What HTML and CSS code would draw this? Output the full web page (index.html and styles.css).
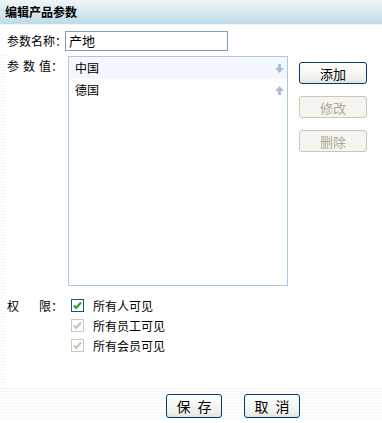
FILE: index.html
```html
<!DOCTYPE html>
<html lang="zh-CN">
<head>
    <meta charset="UTF-8">
    <title>编辑产品参数</title>
    <link rel="stylesheet" href="styles.css">
</head>
<body>
    <div id="dialog">
        <div id="header">编辑产品参数</div>
        <div id="form">
            <div class="row">
                <span class="label">参数名称：</span>
                <input type="text" id="paramName" value="产地">
            </div>
            <div class="row values">
                <span class="label spread"><span>参</span><span>数</span><span>值：</span></span>
                <div id="valueList">
                    <div class="item selected">
                        <span>中国</span>
                        <svg class="arrow" width="9" height="9" viewBox="0 0 9 9"><path d="M3 0h3v4h3L4.5 9 0 4h3z" fill="#a9bfd9"/></svg>
                    </div>
                    <div class="item">
                        <span>德国</span>
                        <svg class="arrow" width="9" height="9" viewBox="0 0 9 9"><path d="M3 9h3V5h3L4.5 0 0 5h3z" fill="#a9bfd9"/></svg>
                    </div>
                </div>
                <div id="valueButtons">
                    <button class="btn">添加</button>
                    <button class="btn" disabled>修改</button>
                    <button class="btn" disabled>删除</button>
                </div>
            </div>
            <div class="row perms">
                <span class="label spread"><span>权</span><span>限：</span></span>
                <div class="checks">
                    <label class="check"><span class="box on"><svg width="9" height="9" viewBox="0 0 9 9"><path d="M1 4.5l2.2 2.4L8 1.5" stroke="#21a121" stroke-width="2" fill="none"/></svg></span>所有人可见</label>
                    <label class="check"><span class="box off"><svg width="9" height="9" viewBox="0 0 9 9"><path d="M1 4.5l2.2 2.4L8 1.5" stroke="#c4c2b5" stroke-width="2" fill="none"/></svg></span>所有员工可见</label>
                    <label class="check"><span class="box off"><svg width="9" height="9" viewBox="0 0 9 9"><path d="M1 4.5l2.2 2.4L8 1.5" stroke="#c4c2b5" stroke-width="2" fill="none"/></svg></span>所有会员可见</label>
                </div>
            </div>
        </div>
        <div id="footer">
            <button class="btn wide">保 存</button>
            <button class="btn wide">取 消</button>
        </div>
    </div>
</body>
</html>
```

FILE: styles.css
```css
body, html {
    margin: 0;
    padding: 0;
    background-color: #ffffff;
    font-family: "Noto Sans CJK SC", "Liberation Sans", sans-serif;
    font-size: 12px;
    color: #000000;
}
#dialog {
    width: 382px;
    height: 423px;
    display: flex;
    flex-direction: column;
    background:
        repeating-linear-gradient(to bottom, #f6f6f6 0, #f6f6f6 1px, #ffffff 1px, #ffffff 3px) left 55px / 6px 335px no-repeat,
        #ffffff;
}
#header {
    height: 24px;
    line-height: 24px;
    padding-left: 5px;
    font-weight: bold;
    background: linear-gradient(to bottom, #f1f5f7, #bddbe7);
    border-bottom: 1px solid #f2f6f8;
}
#form {
    flex: 1;
    padding: 6px 0 0 7px;
}
.row {
    display: flex;
    align-items: flex-start;
}
.label {
    width: 58px;
    flex-shrink: 0;
    line-height: 20px;
    white-space: nowrap;
}
.label.spread {
    display: flex;
    justify-content: space-between;
    width: 56px;
    margin-right: 2px;
}
#paramName {
    margin: 0;
    width: 155px;
    height: 14px;
    padding: 2px 3px;
    border: 1px solid #7f9db9;
    font-family: inherit;
    font-size: 13px;
    line-height: 14px;
    outline: none;
}
.values {
    margin-top: 5px;
}
#valueList {
    margin-left: 3px;
    width: 218px;
    height: 228px;
    border: 1px solid #a7c8ea;
    display: flex;
    flex-direction: column;
}
.item {
    height: 22px;
    line-height: 22px;
    padding: 0 3px 0 6px;
    display: flex;
    justify-content: space-between;
    align-items: center;
}
.item.selected {
    background-color: #f4f7fd;
}
#valueButtons {
    margin-left: 11px;
    padding-top: 6px;
    display: flex;
    flex-direction: column;
    gap: 12px;
}
.btn {
    width: 68px;
    height: 22px;
    padding: 0;
    font-family: inherit;
    font-size: 13px;
    color: #000000;
    border: 1px solid #003c74;
    border-radius: 3px;
    background: linear-gradient(to bottom, #ffffff, #f0f0ea 80%, #e3e2d9);
}
.btn:disabled {
    color: #aca899;
    border-color: #c9c7ba;
    background: #f5f4ef;
}
.perms {
    margin-top: 13px;
}
.perms .label {
    line-height: 13px;
}
.checks {
    margin-left: 6px;
    display: flex;
    flex-direction: column;
}
.check {
    display: flex;
    align-items: flex-start;
    height: 20px;
    line-height: 13px;
}
.box {
    width: 11px;
    height: 11px;
    margin-right: 9px;
    display: flex;
    align-items: center;
    justify-content: center;
    background: #ffffff;
}
.box.on {
    border: 1px solid #1c5180;
}
.box.off {
    border: 1px solid #cac8bb;
}
#footer {
    box-sizing: border-box;
    height: 31px;
    padding: 6px 0 0 166px;
    margin-bottom: 4px;
    display: flex;
    align-items: flex-start;
    gap: 22px;
    background: repeating-linear-gradient(to bottom, #f6f6f6 0, #f6f6f6 1px, #ffffff 1px, #ffffff 3px);
}
.btn.wide {
    width: 56px;
    height: 24px;
    font-size: 14px;
    word-spacing: 4px;
}
```
